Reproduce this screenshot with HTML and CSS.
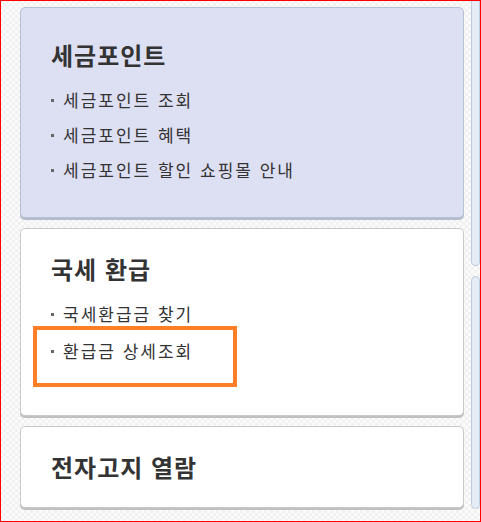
FILE: index.html
```html
<!DOCTYPE html>
<html lang="ko">
  <head>
    <meta charset="UTF-8" />
    <meta name="viewport" content="width=device-width, initial-scale=1.0" />
    <title>세금포인트</title>
    <link rel="stylesheet" href="styles.css">
  </head>
  <body>
    <div class="layout">
      <div class="main">
        <div class="card card-point">
          <h2>세금포인트</h2>
          <ul class="links">
            <li>세금포인트 조회</li>
            <li>세금포인트 혜택</li>
            <li>세금포인트 할인 쇼핑몰 안내</li>
          </ul>
        </div>

        <div class="card card-refund">
          <h2>국세 환급</h2>
          <ul class="links">
            <li>국세환급금 찾기</li>
            <li>환급금 상세조회</li>
          </ul>
          <div class="highlight"></div>
        </div>

        <div class="card card-notice">
          <h2>전자고지 열람</h2>
        </div>
      </div>

      <div class="side">
        <div class="side-card side-top"></div>
        <div class="side-card side-bottom"></div>
      </div>
    </div>
  </body>
</html>
```

FILE: styles.css
```css
* {
  box-sizing: border-box;
}
body {
  margin: 0;
  height: 522px;
  overflow: hidden;
  border: 1px solid #ff0000;
  font-family: "Noto Sans CJK KR", "Noto Sans", sans-serif;
  color: #333;
  background-color: #f7f7f7;
  background-image: repeating-conic-gradient(#fbfbfb 0 25%, #f1f1f1 0 50%);
  background-size: 6px 6px;
}
.layout {
  display: flex;
  gap: 7px;
  padding: 6px 0 0 19px;
}
.main {
  width: 444px;
  flex-shrink: 0;
  display: flex;
  flex-direction: column;
  gap: 10px;
}
.card {
  position: relative;
  background: #fff;
  border: 1px solid #c9c9c9;
  border-radius: 5px;
  box-shadow: 0 2px 0 #c0c0c0;
  padding: 0 30px;
}
.card h2 {
  margin: 0;
  font-size: 24px;
  line-height: 30px;
  letter-spacing: 1px;
  font-weight: bold;
  color: #333;
}
.card-point {
  height: 211px;
  padding-top: 32px;
  background: #dddff3;
  border-color: #b7c1d4;
  box-shadow: 0 2px 0 #b4bccb;
}
.card-refund {
  height: 188px;
  padding-top: 25px;
}
.card-notice {
  height: 82px;
  padding-top: 25px;
}
.links {
  list-style: none;
  margin: 12px 0 0;
  padding: 0;
}
.links li {
  position: relative;
  padding-left: 12px;
  font-size: 17px;
  line-height: 35px;
  letter-spacing: 2px;
  color: #333;
}
.links li::before {
  content: "";
  position: absolute;
  left: 0;
  top: 17px;
  width: 3px;
  height: 3px;
  background: #666;
}
.card-refund .links {
  margin-top: 11px;
}
.card-refund .links li {
  line-height: 37px;
}
.card-refund .links li::before {
  top: 18px;
}
.highlight {
  position: absolute;
  left: 12px;
  top: 97px;
  width: 204px;
  height: 61px;
  border: 4px solid #ff7f27;
}
.side {
  width: 40px;
  display: flex;
  flex-direction: column;
  gap: 10px;
  margin-top: -6px;
}
.side-card {
  background: #e6ecf5;
  border: 1px solid #bccbdf;
  border-radius: 5px;
}
.side-top {
  height: 265px;
  border-top: none;
  border-radius: 0 0 5px 5px;
}
.side-bottom {
  height: 233px;
}
```
